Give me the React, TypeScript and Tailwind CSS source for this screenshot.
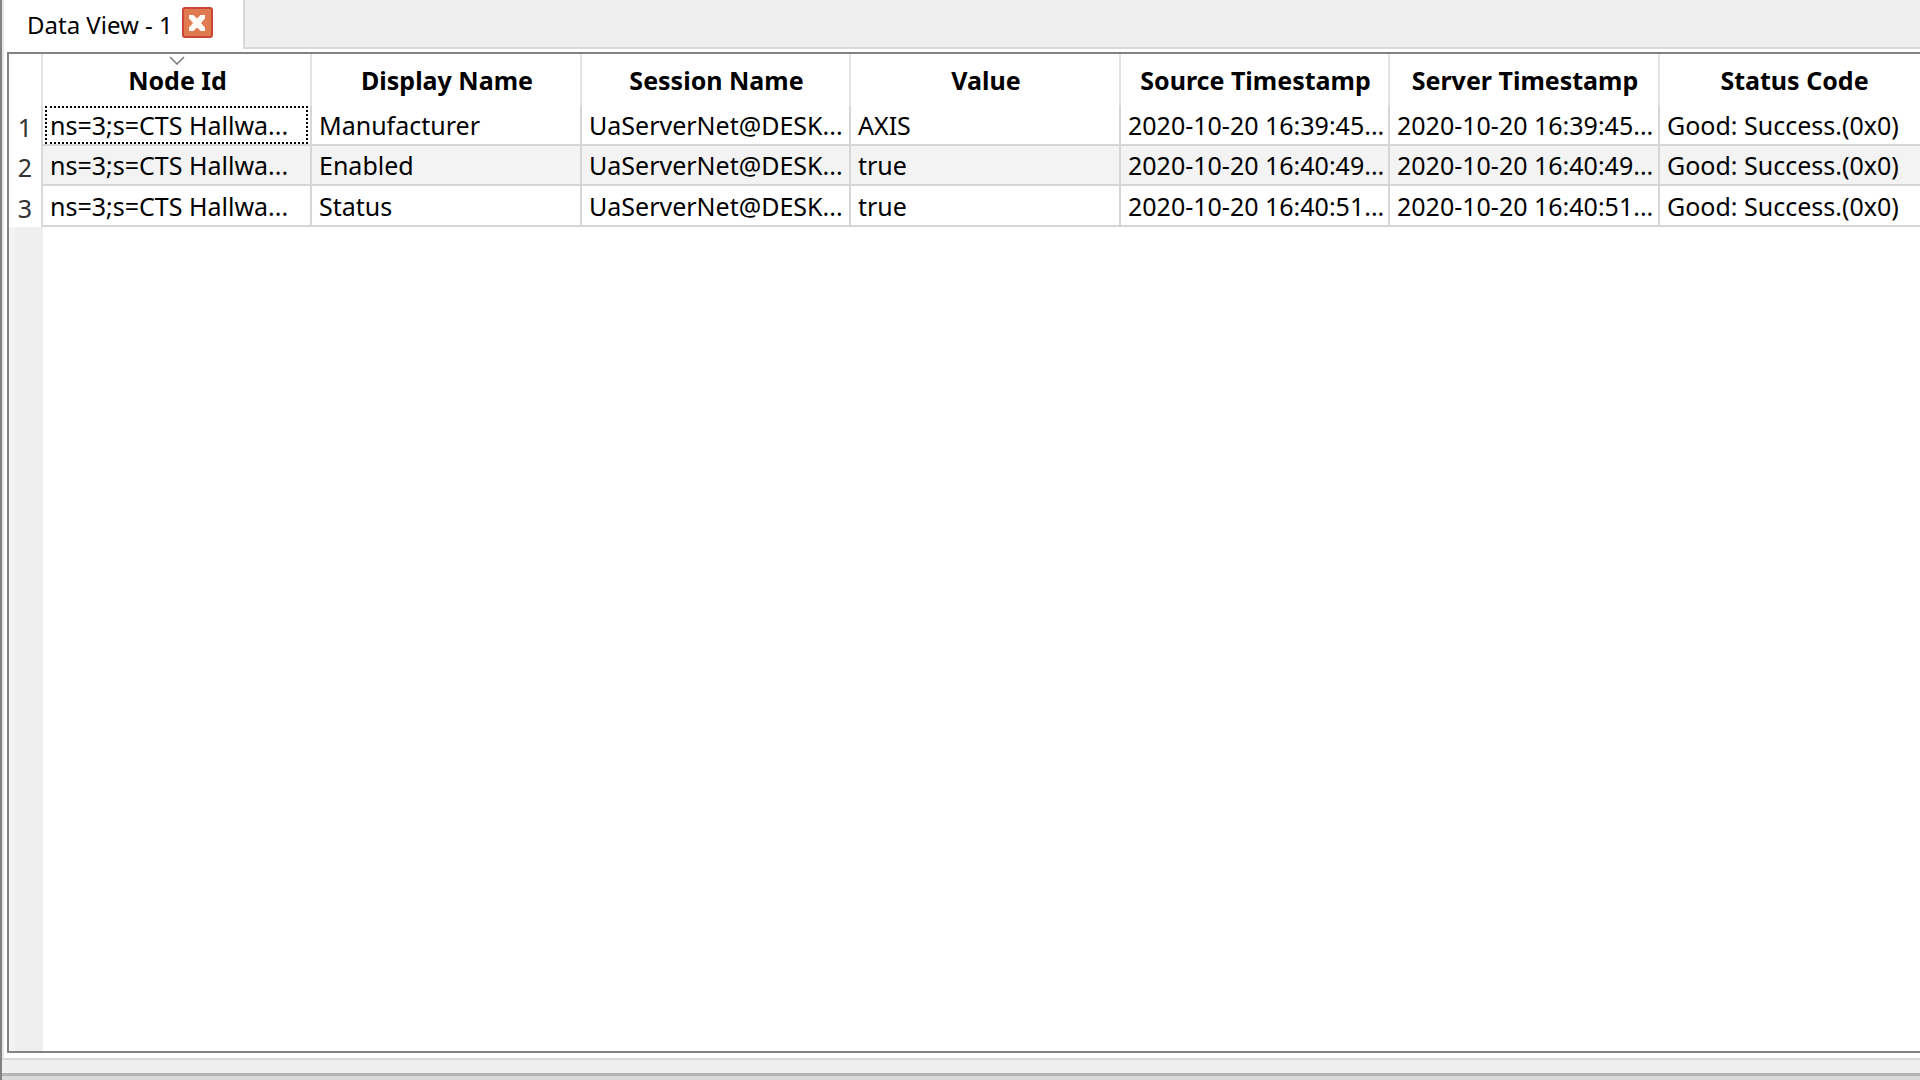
import { clsx } from "clsx";

const columns = [
  "Node Id",
  "Display Name",
  "Session Name",
  "Value",
  "Source Timestamp",
  "Server Timestamp",
  "Status Code",
];

const rows = [
  ["ns=3;s=CTS Hallwa...", "Manufacturer", "UaServerNet@DESK...", "AXIS", "2020-10-20 16:39:45...", "2020-10-20 16:39:45...", "Good: Success.(0x0)"],
  ["ns=3;s=CTS Hallwa...", "Enabled", "UaServerNet@DESK...", "true", "2020-10-20 16:40:49...", "2020-10-20 16:40:49...", "Good: Success.(0x0)"],
  ["ns=3;s=CTS Hallwa...", "Status", "UaServerNet@DESK...", "true", "2020-10-20 16:40:51...", "2020-10-20 16:40:51...", "Good: Success.(0x0)"],
];

const CloseButton = () => (
  <button
    type="button"
    aria-label="Close tab"
    className="flex size-[31px] items-center justify-center rounded-[3px] border-2 border-[#cb4434] bg-[#e07a50]"
  >
    <svg viewBox="0 0 18 18" className="size-[18px]">
      <path
        d="M1 1h4.500l3.500 3.500L12.500 1H17v3.500L13 9l4 4.500V17h-4.500L9 13.500 5.500 17H1v-3.500L5 9 1 4.500z"
        fill="#fffaf5"
      />
    </svg>
  </button>
);

const SortArrow = () => (
  <svg viewBox="0 0 16 9" className="absolute top-[2px] left-1/2 h-[9px] w-4 -translate-x-1/2">
    <path d="M1 1l7 7 7-7" fill="none" stroke="#7a7a7a" strokeWidth="1.500" />
  </svg>
);

const DataTable = () => (
  <table className="w-[1919px] table-fixed border-separate border-spacing-0 text-[25px] leading-[34px] whitespace-nowrap">
    <colgroup>
      <col className="w-[34px]" />
      {columns.map((name, i) => (
        <col key={name} className={i % 2 === 0 ? "w-[269px]" : "w-[270px]"} />
      ))}
    </colgroup>
    <thead>
      <tr className="h-[52px]">
        <td className="border-r-2 border-[#e3e3e3] p-0" />
        {columns.map((name, i) => (
          <th key={name} scope="col" className="relative border-r-2 border-[#e3e3e3] p-0 pl-[2px] font-bold">
            {i === 0 && <SortArrow />}
            {name}
          </th>
        ))}
      </tr>
    </thead>
    <tbody>
      {rows.map((row, r) => (
        <tr key={r} className="h-10 even:bg-[#f3f3f3] last:h-[41px]">
          <th scope="row" className="border-r-2 border-[#d9d9d9] bg-white p-0 pt-[2px] text-center font-normal text-[#333]">
            {r + 1}
          </th>
          {row.map((value, c) => (
            <td key={c} className="border-r-2 border-b-2 border-[#d6d6d6] p-0">
              <div
                className={clsx(
                  "flex h-[38px] items-center",
                  r === 0 && c === 0 ? "mx-[2px] border-2 border-dotted border-black px-[3px]" : "px-[7px]",
                )}
              >
                {value}
              </div>
            </td>
          ))}
        </tr>
      ))}
    </tbody>
  </table>
);

export default function App() {
  return (
    <div className="flex h-screen flex-col overflow-hidden border-l-2 border-[#828286] bg-[#efefef] font-['Noto_Sans',sans-serif] text-black">
      <div className="flex h-[49px] shrink-0">
        <div className="flex items-start gap-[9px] border-r-2 border-l-2 border-r-[#d9d9d9] border-l-[#e6e6e6] bg-white pt-[7px] pr-[30px] pl-[23px]">
          <span className="text-2xl leading-[35px]">Data View - 1</span>
          <CloseButton />
        </div>
        <div className="flex-1 border-b-2 border-[#d9d9d9]" />
      </div>

      <main className="flex min-h-0 flex-1 flex-col border-b-2 border-l-2 border-b-[#d9d9d9] border-l-[#e6e6e6] bg-white pt-[3px] pb-[5px] pl-[3px]">
        <div className="flex min-h-0 flex-1 flex-col overflow-hidden border-2 border-r-0 border-[#838383]">
          <DataTable />
          <div className="w-[34px] flex-1 border-l-6 border-[#f4f4f4] bg-[#efefef]" />
        </div>
      </main>

      <div className="h-[13px] shrink-0" />
      <div className="h-[7px] shrink-0 border-t-3 border-[#b5b5b5] bg-[#dadada]" />
    </div>
  );
}
